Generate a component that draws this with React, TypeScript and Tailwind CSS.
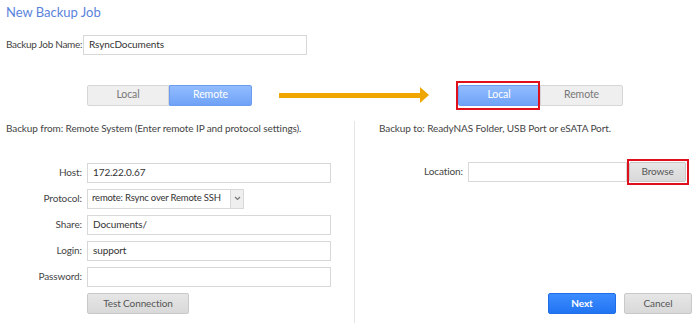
import React from "react";

const Field = ({ label, value }: { label: string; value?: string }) => (
  <div className="flex items-center h-[20px] mb-[6px]">
    <span className="w-[87px] pr-[5px] text-right text-[#444] whitespace-nowrap">{label}</span>
    <div className="w-[244px] h-[20px] border border-[#d8d8d8] bg-white px-[5px] flex items-center text-[#333]">
      {value}
    </div>
  </div>
);

const Toggle = ({ active, highlight }: { active: "local" | "remote"; highlight?: boolean }) => {
  const on = "bg-gradient-to-b from-[#92bcff] to-[#6fa2f7] text-white border border-[#6b9cf0]";
  const off = "bg-[#efefef] text-[#777] border border-[#d6d6d6]";
  return (
    <div className="flex w-[165px] h-[21px] text-[10.5px]">
      <div className="relative w-[82px]">
        <div className={`h-full flex items-center justify-center rounded-l-[2px] ${active === "local" ? on : off}`}>Local</div>
        {highlight && (
          <div className="absolute -left-[2px] -top-[4px] w-[84px] h-[29px] border-2 border-[#e00f1c]" />
        )}
      </div>
      <div className={`w-[83px] flex items-center justify-center rounded-r-[2px] ${active === "remote" ? on : off}`}>Remote</div>
    </div>
  );
};

export default function App() {
  return (
    <div
      className="w-[700px] h-[323px] bg-white text-[10px] tracking-[-0.1px] overflow-hidden"
      style={{ fontFamily: 'Lato, "Open Sans", sans-serif' }}
    >
      <div className="pl-[6px] pt-[3px] text-[13px] tracking-normal text-[#5a83dc]">New Backup Job</div>

      <div className="flex items-center pl-[6px] mt-[12px] h-[20px]">
        <span className="w-[77px] text-[#444] whitespace-nowrap tracking-[-0.3px]">Backup Job Name:</span>
        <div className="w-[224px] h-[20px] border border-[#d8d8d8] px-[5px] flex items-center text-[#333]">
          RsyncDocuments
        </div>
      </div>

      {/* toggles + arrow */}
      <div className="flex items-center mt-[30px] h-[21px]">
        <div className="ml-[87px]">
          <Toggle active="remote" />
        </div>
        <div className="ml-[27px] w-[150px] h-[16px] flex items-center">
          <div className="flex-1 h-[5px] bg-[#efa600]" />
          <svg width="9" height="16" viewBox="0 0 9 16">
            <polygon points="0,0 9,8 0,16" fill="#efa600" />
          </svg>
        </div>
        <div className="ml-[29px]">
          <Toggle active="local" highlight />
        </div>
      </div>

      <div className="flex mt-[15px]">
        {/* left column */}
        <div className="w-[355px] border-r border-[#e6e6e6] h-[210px]">
          <div className="pl-[6px] text-[#444] whitespace-nowrap">Backup from: Remote System (Enter remote IP and protocol settings).</div>
          <div className="mt-[27px]">
            <Field label="Host:" value="172.22.0.67" />
            <div className="flex items-center h-[20px] mb-[6px]">
              <span className="w-[87px] pr-[5px] text-right text-[#444]">Protocol:</span>
              <div className="w-[157px] h-[20px] border border-[#d8d8d8] flex items-center text-[#333]">
                <span className="flex-1 pl-[4px] pr-[2px] whitespace-nowrap overflow-hidden text-[9.5px] tracking-[-0.2px]">remote: Rsync over Remote SSH</span>
                <span className="w-[13px] h-full border-l border-[#d8d8d8] bg-[#efefef] flex items-center justify-center">
                  <svg width="7" height="5" viewBox="0 0 7 5">
                    <polyline points="1,1 3.5,3.5 6,1" fill="none" stroke="#777" strokeWidth="1.2" />
                  </svg>
                </span>
              </div>
            </div>
            <Field label="Share:" value="Documents/" />
            <Field label="Login:" value="support" />
            <Field label="Password:" />
            <div className="ml-[87px] w-[102px] h-[21px] rounded-[2px] border border-[#c9c9c9] bg-gradient-to-b from-[#e6e6e6] to-[#d9d9d9] flex items-center justify-center text-[#555]">
              Test Connection
            </div>
          </div>
        </div>

        {/* right column */}
        <div className="flex-1 flex flex-col">
          <div className="pl-[24px] text-[#444] whitespace-nowrap">Backup to: ReadyNAS Folder, USB Port or eSATA Port.</div>
          <div className="flex items-center mt-[26px] h-[20px]">
            <span className="w-[113px] pr-[5px] text-right text-[#444]">Location:</span>
            <div className="w-[159px] h-[20px] border border-[#d8d8d8]" />
            <div className="relative ml-[2px]">
              <div className="w-[57px] h-[20px] rounded-[2px] border border-[#c9c9c9] bg-gradient-to-b from-[#e6e6e6] to-[#d9d9d9] flex items-center justify-center text-[#555]">
                Browse
              </div>
              <div className="absolute -left-[2px] -top-[3px] w-[62px] h-[26px] border-2 border-[#e00f1c]" />
            </div>
          </div>
          <div className="flex justify-end gap-[8px] pr-[8px] mt-[111px]">
            <div className="w-[68px] h-[21px] rounded-[2px] bg-gradient-to-b from-[#3d8cff] to-[#2174f2] border border-[#1f6ee8] text-white font-bold flex items-center justify-center">
              Next
            </div>
            <div className="w-[68px] h-[21px] rounded-[2px] border border-[#c9c9c9] bg-gradient-to-b from-[#e6e6e6] to-[#d9d9d9] text-[#555] flex items-center justify-center">
              Cancel
            </div>
          </div>
        </div>
      </div>
    </div>
  );
}
